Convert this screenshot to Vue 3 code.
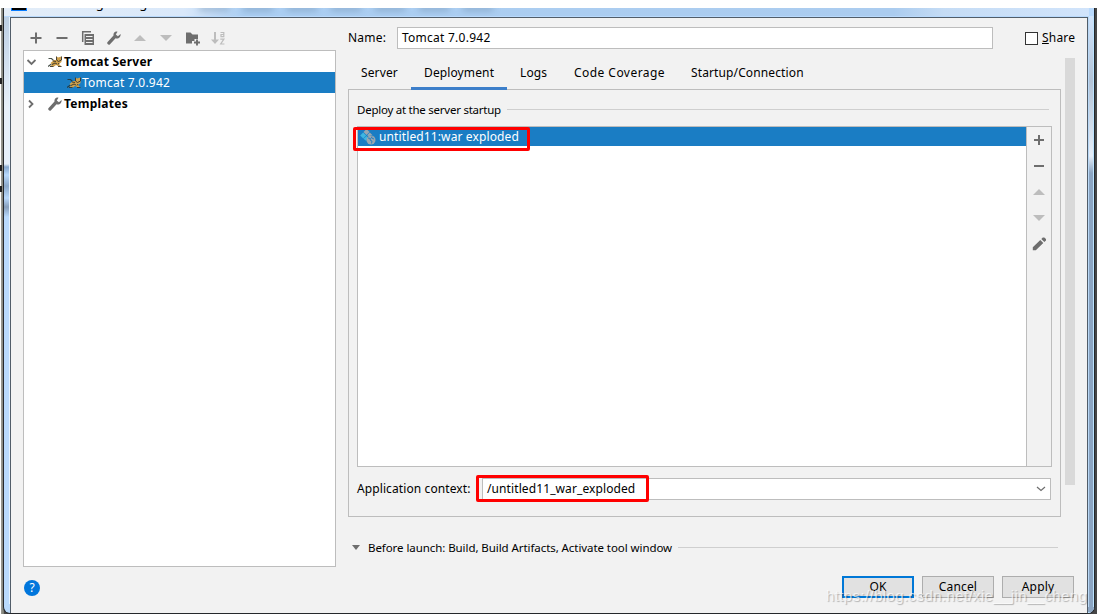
<script setup>
const tabs = [
  { label: 'Server', cls: 'server' },
  { label: 'Deployment', cls: 'deployment active' },
  { label: 'Logs', cls: 'logs' },
  { label: 'Code Coverage', cls: 'coverage' },
  { label: 'Startup/Connection', cls: 'startup' },
]
</script>

<template>
  <div class="screen">
    <div class="backdrop-left"><i class="m1"></i><i class="m2"></i><i class="m3"></i><i class="m4"></i></div>
    <div class="window">
      <div class="titlebar"><span class="logo"></span><span class="caption">Run/Debug Configurations</span><span class="haze"></span></div>
      <div class="side-left"></div>
      <div class="side-right"></div>
      <div class="dialog">
        <aside>
          <div class="toolbar">
            <svg viewBox="0 0 16 16"><path d="M8 2.500v11M2.500 8h11" stroke="#6e6e6e" stroke-width="2" /></svg>
            <svg viewBox="0 0 16 16"><path d="M2.500 8h11" stroke="#6e6e6e" stroke-width="2" /></svg>
            <svg viewBox="0 0 16 16"><path d="M2.700 12V1.700H11" fill="none" stroke="#6e6e6e" stroke-width="1.500" /><path d="M4.500 4H14v11H4.500z" fill="#6e6e6e" /><path d="M6 6.500h6.500M6 9.500h6.500M6 12.500h6.500" stroke="#f2f2f2" stroke-width="1" /></svg>
            <svg viewBox="0 0 16 16"><path d="M14.600 3.900l-2.700 2.300-2.100-1.700 1.700-2.800C8.900 1 7 3 7.500 5.600L1.400 12.200c-1 1.200 1.200 3.300 2.400 2.200L9.600 8.200c2.700 1 5.400-1.200 5-4.300z" fill="#6e6e6e" /></svg>
            <svg viewBox="0 0 16 16"><path d="M2 11l6-6 6 6z" fill="#bdbdbd" /></svg>
            <svg viewBox="0 0 16 16"><path d="M2 5l6 6 6-6z" fill="#bdbdbd" /></svg>
            <svg viewBox="0 0 16 16"><path d="M2 2.500h4.500l2 2H14V9h-3.500v2H8v2.500H2z" fill="#6e6e6e" /><path d="M13 9.500v6M10 12.500h6" stroke="#6e6e6e" stroke-width="1.900" /></svg>
            <svg viewBox="0 0 16 16"><path d="M5 2v10" stroke="#bdbdbd" stroke-width="2" /><path d="M1 9.500h8L5 14z" fill="#bdbdbd" /><path d="M10.500 2.500h3.300v4.700M13.800 4.500H11v2.200h2.800M10.300 9.200h3.600L10.700 14h3.700" fill="none" stroke="#bdbdbd" stroke-width="1.200" /></svg>
          </div>
          <div class="tree">
            <div class="row">
              <svg class="chev" viewBox="0 0 10 10"><path d="M1.500 3L5.500 7 9.500 3" fill="none" stroke="#6e6e6e" stroke-width="1.800" /></svg>
              <svg class="cat" viewBox="0 0 14 12"><path d="M.5 2.500h3L5.500 4.500M0 10.500L3.500 8" fill="none" stroke="#4b544d" stroke-width="1.200" /><path d="M2.500 7l3.500-3L8.500 4V.5l1.500 1L13.500.5V6L11 8l2.500 2.500H11L8 9l-2 1.500H2L4 8.500z" fill="#cfa04a" /><path d="M8.500.5V4l2 1.500L13.500 4V.5M2 10.500h3.500M10 10.500h3.500M4 8.500l3-1.500 2 1M5 5l3 .5M11 7l-1 1.500" fill="none" stroke="#37342c" stroke-width=".9" /></svg>
              <b class="t-server">Tomcat Server</b>
            </div>
            <div class="row selected">
              <svg class="cat" viewBox="0 0 14 12"><path d="M.5 2.500h3L5.500 4.500M0 10.500L3.500 8" fill="none" stroke="#233e48" stroke-width="1.200" /><path d="M2.500 7l3.500-3L8.500 4V.5l1.500 1L13.500.5V6L11 8l2.500 2.500H11L8 9l-2 1.500H2L4 8.500z" fill="#cfa04a" /><path d="M8.500.5V4l2 1.500L13.500 4V.5M2 10.500h3.500M10 10.500h3.500M4 8.500l3-1.500 2 1M5 5l3 .5M11 7l-1 1.500" fill="none" stroke="#37342c" stroke-width=".9" /></svg>
              <span class="t-child">Tomcat 7.0.942</span>
            </div>
            <div class="row">
              <svg class="chev" viewBox="0 0 10 10"><path d="M3 1.500L6.500 5 3 8.500" fill="none" stroke="#6e6e6e" stroke-width="1.800" /></svg>
              <svg class="wrench" viewBox="0 0 16 16"><path d="M14.600 3.900l-2.700 2.300-2.100-1.700 1.700-2.800C8.900 1 7 3 7.500 5.600L1.400 12.200c-1 1.200 1.200 3.300 2.400 2.200L9.600 8.200c2.700 1 5.400-1.200 5-4.300z" fill="#6e6e6e" /></svg>
              <b class="t-templates">Templates</b>
            </div>
          </div>
          <div class="help">?</div>
        </aside>

        <main>
          <div class="name-row">
            <label class="t-name">Name:</label>
            <div class="name-field"><span class="t-value">Tomcat 7.0.942</span></div>
            <i class="checkbox"></i><span class="share"><u>S</u>hare</span>
          </div>
          <nav><div v-for="tab in tabs" :key="tab.label" class="tab" :class="tab.cls"><span>{{ tab.label }}</span></div></nav>
          <section class="panel">
            <div class="group-title"><span>Deploy at the server startup</span><hr /></div>
            <div class="deploy">
              <div class="list">
                <div class="artifact">
                  <svg viewBox="0 0 16 16"><path d="M6.500 0l3 3-3 3-3-3z" fill="#9aa7b0" /><path d="M3.200 3.500l3 3-3 3-3-3z" fill="#40b6e0" /><path d="M9.800 3.500l2.500 2.500-3.500 1-1.800-.5z" fill="#9aa7b0" /><path d="M6.500 7l1 1-1.200 4-2.800-2.300z" fill="#40b6e0" /><circle cx="11" cy="11" r="4.500" fill="#9aa7b0" /><path d="M8 9l2.500.5L10 11l2 1-.5 2.500M12 7.500l-.5 1.500 2.500 1" fill="none" stroke="#1a7dc4" stroke-width=".9" /></svg>
                  <span>untitled11:war exploded</span>
                </div>
              </div>
              <div class="list-tools">
                <svg viewBox="0 0 16 16"><path d="M8 3v10M3 8h10" stroke="#6e6e6e" stroke-width="2" /></svg>
                <svg viewBox="0 0 16 16"><path d="M3 8h10" stroke="#6e6e6e" stroke-width="2" /></svg>
                <svg viewBox="0 0 16 16"><path d="M2 11l6-6 6 6z" fill="#bdbdbd" /></svg>
                <svg viewBox="0 0 16 16"><path d="M2 5l6 6 6-6z" fill="#bdbdbd" /></svg>
                <svg viewBox="0 0 16 16"><path d="M1.800 11.300L9.300 4l3 3L4.800 14.300h-3zM10.300 3l1.500-1.500h1.500L15 3v1.500L13.300 6z" fill="#6e6e6e" /></svg>
              </div>
            </div>
            <div class="context">
              <label>Application context:</label>
              <div class="combo"><span>/untitled11_war_exploded</span><svg viewBox="0 0 10 6"><path d="M1 1l4 3.500L9 1" fill="none" stroke="#6e6e6e" stroke-width="1.200" /></svg></div>
            </div>
          </section>
          <div class="before"><i></i><span>Before launch: Build, Build Artifacts, Activate tool window</span><hr /></div>
          <div class="buttons"><button class="ok"><span>OK</span></button><button><span>Cancel</span></button><button><span>Apply</span></button></div>
        </main>
        <div class="scrollbar"></div>
      </div>
    </div>
    <div class="mark deploy-mark"></div>
    <div class="mark context-mark"></div>
    <div class="watermark">https://blog.csdn.net/xie__jin__cheng</div>
  </div>
</template>

<style>
html, body { margin: 0; overflow: hidden; background: #fff; }
</style>
<style scoped>
* { box-sizing: border-box; }
svg { display: block; flex: none; }
span, b, label { white-space: nowrap; }
.screen { position: relative; width: 1097px; height: 614px; overflow: hidden; padding-top: 8px; font: 12px/18px "Noto Sans", "Open Sans", sans-serif; color: #000; background: linear-gradient(#fff 8px, #464646 8px); }
.backdrop-left { position: absolute; left: 0; top: 8px; width: 4px; height: 606px; background: linear-gradient(90deg, #fff 1px, #9b9b94 1px, #777971); }
.backdrop-left i { position: absolute; left: 0; width: 2px; height: 6px; background: #222; }
.m1 { top: 17px; } .m2 { top: 70px; } .m3 { top: 157px; } .m4 { top: 178px; }
.window { position: relative; margin-left: 3px; width: 1092px; height: 606px; border: solid #25282b; border-width: 0 1px 1px; border-radius: 0 0 7px 7px; overflow: hidden; background: #b9dafd; display: grid; grid-template: 9px 587px / 7px 1078px; }
.titlebar { grid-column: 1 / 3; position: relative; height: 8px; overflow: hidden; background: linear-gradient(90deg, #e3edf8 0, #d9e8fa 180px, #abcef2 240px, #abccef 890px, #c5dcf5 940px, #d1e4fb); }
.logo { position: absolute; left: 7px; top: 0; width: 16px; height: 3px; border: solid #087cff; border-width: 0 1px 1px; background: #000; }
.caption { position: absolute; left: 30px; top: -13px; font-size: 13px; line-height: 16px; }
.haze { position: absolute; left: 195px; top: -3px; width: 300px; height: 6px; background: repeating-linear-gradient(90deg, #55739155 0, #55739155 28px, transparent 32px, transparent 44px); filter: blur(3px); }
.side-left { background: linear-gradient(#bdd0e4, #e8f0f9 90px, #e7f1fb 147px, #86a8ce 150px, #b9dafd 158px, #8ca9ca 169px, #b9dafd 181px, #879fbc 190px, #b9dafd 200px); border-right: 2px solid #e5f3ff; }
.side-right { position: absolute; left: 1084px; top: 8px; width: 7px; height: 598px; background: linear-gradient(90deg, #b9d8f6 1px, transparent 1px, transparent 5px, #bce4ff 5px), linear-gradient(#d1e4fb, #b3c3d6 65px, #e5edf7 140px, #8ca5c2 157px); }
.window::after { content: ""; position: absolute; right: 0; bottom: 0; left: 270px; height: 5px; background: linear-gradient(90deg, transparent, #8ca5c2 8px); border-bottom: 1px solid #bce4ff; }
.dialog { position: relative; z-index: 1; grid-column: 2; width: 1078px; height: 597px; border: 1px solid #515d69; background: #f2f2f2; display: grid; grid-template-columns: 325px 727px 11px; margin-left: -1px; }
aside { padding: 10px 0 0 12px; }
.toolbar { height: 20px; display: flex; gap: 10px; align-items: center; padding-left: 5px; margin-bottom: 2px; }
.toolbar svg { width: 16px; height: 16px; }
.tree { width: 313px; height: 517px; border: 1px solid #bdbdbd; background: #fff; }
.row { height: 21px; display: flex; align-items: center; padding-left: 2px; }
.row svg.chev { width: 10px; height: 10px; margin-right: 12px; }
.row svg.cat { width: 14px; height: 12px; margin-right: 2px; }
.row svg.wrench { width: 16px; height: 16px; margin: 0 1px 0 -1px; }
.t-server { letter-spacing: .22px; } .t-templates { letter-spacing: .25px; } .t-child { letter-spacing: .22px; }
.selected { background: #1a7dc4; color: #fff; padding-left: 43px; }
.row.selected svg.cat { margin-right: 1px; }
.help { width: 16px; height: 16px; margin: 13px 0 0 1px; border-radius: 50%; background: #0076dc; color: #fff; text-align: center; line-height: 16px; }
main { width: 727px; padding: 9px 0 0 12px; }
.name-row { display: flex; align-items: center; height: 22px; }
.name-row label { width: 49px; flex: none; letter-spacing: .2px; }
.name-field { width: 596px; height: 22px; border: 1px solid #bdbdbd; background: #fff; padding-left: 4px; line-height: 20px; flex: none; letter-spacing: .25px; }
.checkbox { width: 13px; height: 13px; border: 1px solid #333; background: #fff; margin-left: 32px; flex: none; }
.share { margin-left: 4px; letter-spacing: .2px; }
nav { position: relative; z-index: 1; display: flex; height: 41px; padding-top: 8px; }
.tab { height: 33px; line-height: 32px; padding-left: 13px; flex: none; letter-spacing: .12px; }
.server { width: 63px; } .deployment { width: 96px; } .logs { width: 54px; } .startup { width: 140px; }
.coverage { width: 117px; letter-spacing: .45px; }
.active { border-bottom: 3px solid #3d7fca; }
.panel { width: 713px; height: 428px; margin-top: -1px; border: 1px solid #bdbdbd; padding: 11px 9px 0 8px; }
.group-title { display: flex; align-items: center; height: 18px; gap: 6px; padding-right: 2px; }
.group-title span { font-size: 11.5px; letter-spacing: -.25px; }
hr { border: 0; height: 1px; background: #cfcfcf; margin: 0; flex: 1; }
.group-title hr { margin-top: -1px; }
.deploy { display: flex; width: 695px; height: 341px; border: 1px solid #bdbdbd; margin-top: 7px; }
.list { width: 669px; flex: none; background: #fff; border-right: 1px solid #bdbdbd; }
.artifact { display: flex; height: 19px; background: #1a7dc4; color: #fff; align-items: center; padding-left: 2px; gap: 3px; letter-spacing: .12px; }
.artifact svg { width: 16px; height: 16px; }
.list-tools { width: 24px; padding: 5px 0 0 4px; display: flex; flex-direction: column; gap: 10px; }
.list-tools svg { width: 16px; height: 16px; }
.context { display: flex; align-items: center; margin-top: 11px; height: 22px; letter-spacing: .1px; }
.context label { width: 125px; }
.combo { width: 569px; height: 22px; border: 1px solid #bdbdbd; background: #fff; display: flex; align-items: center; justify-content: space-between; padding: 0 4px; }
.combo svg { width: 10px; height: 6px; }
.before { display: flex; align-items: center; height: 18px; width: 706px; margin: 22px 0 0 4px; }
.before i { border: solid transparent; border-width: 5px 4.5px 0; border-top-color: #6e6e6e; margin: -1px 8px 0 0; }
.before span { font-size: 11.5px; letter-spacing: -.07px; }
.before hr { margin: -1px 0 0 6px; }
.buttons { display: flex; gap: 8px; justify-content: flex-end; width: 726px; margin-top: 19px; }
button { font: inherit; width: 72px; height: 22px; border: 1px solid #adadad; background: #e1e1e1; padding: 0; color: #000; line-height: 18px; letter-spacing: .15px; }
.ok { border: 2px solid #0078d7; }
.scrollbar { width: 10px; height: 427px; background: #d9d9d9; margin: 40px 0 0 2px; }
.mark { position: absolute; z-index: 3; border: 3px solid #f00; border-radius: 2px; }
.deploy-mark { left: 353px; top: 127px; width: 177px; height: 24px; }
.context-mark { left: 476px; top: 475px; width: 173px; height: 27px; }
.watermark { position: absolute; z-index: 4; left: 826px; top: 586px; font: 15px/20px "Liberation Sans", sans-serif; letter-spacing: .39px; color: #ffffffb0; text-shadow: 1px 1px 1px #0004; white-space: nowrap; }
</style>
